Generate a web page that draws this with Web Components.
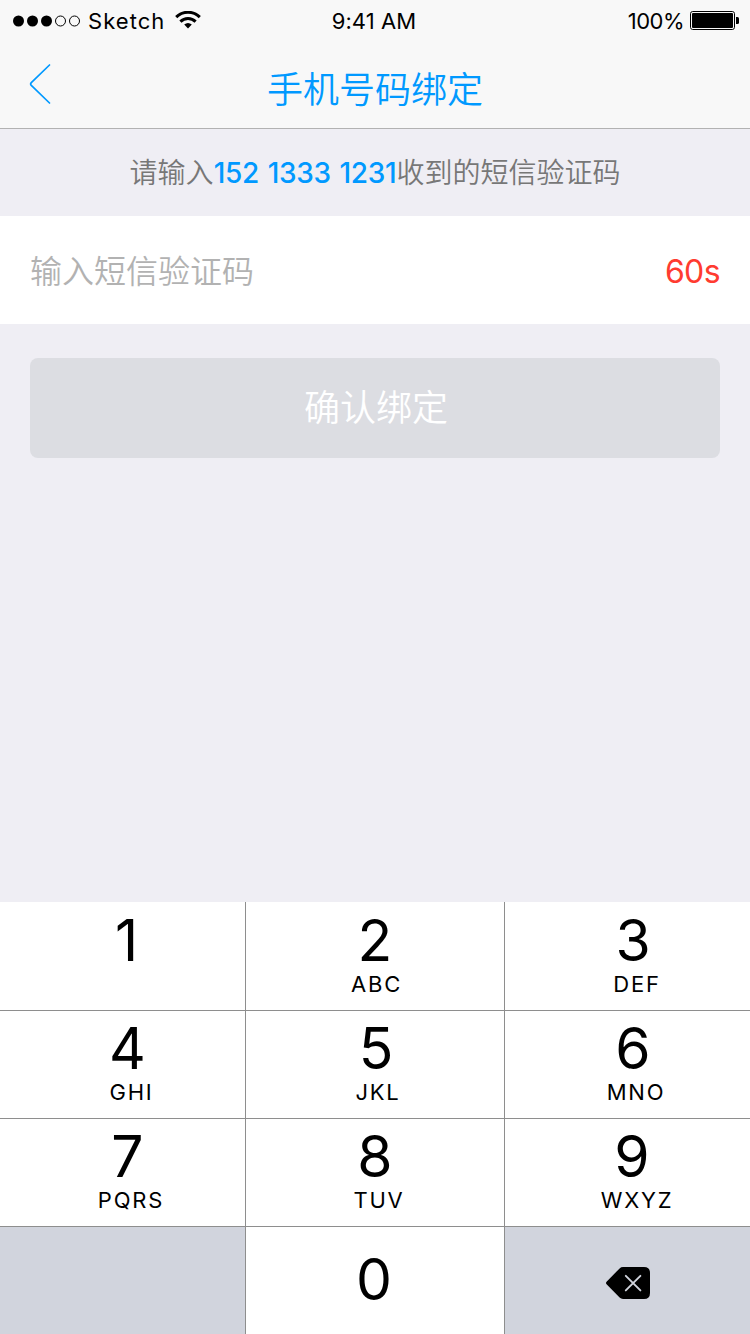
<!DOCTYPE html>
<html lang="zh-CN">
<head>
<meta charset="utf-8">
<title>手机号码绑定</title>
<style>
  html, body { margin: 0; padding: 0; }
  body {
    width: 750px; height: 1334px; overflow: hidden; background: #efeef4;
    font-family: Inter, "Noto Sans CJK SC", sans-serif; color: #000;
  }
</style>
</head>
<body>
<phone-screen>
  <status-bar slot="status" carrier="Sketch" time="9:41 AM" battery="100%"></status-bar>
  <nav-bar slot="nav">手机号码绑定</nav-bar>
  <sms-hint phone="152 1333 1231"></sms-hint>
  <code-field placeholder="输入短信验证码" countdown="60s"></code-field>
  <submit-button>确认绑定</submit-button>
  <number-pad slot="keyboard">
    <pad-key digit="1" style="--top:9px;--dx:-1px"></pad-key>
    <pad-key digit="2" style="--top:9px;--lx:1.5px">ABC</pad-key>
    <pad-key digit="3" style="--top:9px;--lx:4px">DEF</pad-key>
    <pad-key digit="4" style="--lx:4px">GHI</pad-key>
    <pad-key digit="5" style="--lx:3px;--dx:1px">JKL</pad-key>
    <pad-key digit="6" style="--lx:3px">MNO</pad-key>
    <pad-key digit="7" style="--lx:3.5px">PQRS</pad-key>
    <pad-key digit="8" style="--lx:4px">TUV</pad-key>
    <pad-key digit="9" style="--lx:4px;--dx:-1px">WXYZ</pad-key>
    <pad-key muted></pad-key>
    <pad-key digit="0" style="--top:23px;--dx:-1px"></pad-key>
    <pad-key muted><delete-icon></delete-icon></pad-key>
  </number-pad>
</phone-screen>
<script>
  const define = (name, html) => customElements.define(name, class extends HTMLElement {
    constructor() {
      super();
      const attr = key => this.getAttribute(key) || '';
      this.attachShadow({ mode: 'open' }).innerHTML = typeof html === 'function' ? html(attr) : html;
    }
  });

  define('phone-screen', `
    <style>
      :host { display: flex; flex-direction: column; width: 750px; height: 1334px; }
      header { height: 128px; background: #f8f8f8; border-bottom: 1px solid #b2b2b2; }
      main { flex: 1; }
    </style>
    <header><slot name="status"></slot><slot name="nav"></slot></header>
    <main><slot></slot></main>
    <slot name="keyboard"></slot>`);

  define('status-bar', a => `
    <style>
      :host { display: grid; grid-template-columns: 1fr auto 1fr; height: 40px; align-items: center;
              padding: 0 11px 0 13px; box-sizing: border-box; font-size: 22px; line-height: 38px; }
      div { display: flex; align-items: center; height: 40px; }
      svg { display: block; }
      .dots { margin-top: 1px; }
      span { padding-top: 2px; white-space: nowrap; }
      .carrier { margin-left: 8px; letter-spacing: 1.05px; }
      .wifi { margin-left: 10px; }
      .time { letter-spacing: .1px; padding-right: 4px; }
      .right { justify-content: flex-end; }
      .pct { margin-right: 6px; letter-spacing: -.5px; }
    </style>
    <div>
      <svg class="dots" width="67" height="12" viewBox="0 0 67 12">
        <g><circle cx="5.5" cy="6" r="5.5"/><circle cx="19.5" cy="6" r="5.5"/><circle cx="33.5" cy="6" r="5.5"/></g>
        <g fill="none" stroke="#000"><circle cx="47.5" cy="6" r="5"/><circle cx="61.5" cy="6" r="5"/></g>
      </svg>
      <span class="carrier">${a('carrier')}</span>
      <svg class="wifi" width="26" height="18" viewBox="0 0 26 18">
        <g fill="none" stroke="#000" stroke-width="3">
          <path d="M1.2 6.1A16.8 16.8 0 0 1 24.8 6.1"/>
          <path d="M5.4 10.6A10.8 10.8 0 0 1 20.6 10.6"/>
        </g>
        <path d="M9.2 13.6A6 6 0 0 1 16.8 13.6L13 17.6Z"/>
      </svg>
    </div>
    <span class="time">${a('time')}</span>
    <div class="right">
      <span class="pct">${a('battery')}</span>
      <svg width="49" height="19" viewBox="0 0 49 19">
        <rect x=".5" y=".5" width="44" height="18" rx="2.2" fill="none" stroke="#000"/>
        <rect x="2" y="2" width="41" height="15" rx="1"/>
        <path d="M46 6h1.5q1.5 0 1.5 1.5v4q0 1.5-1.5 1.5H46z"/>
      </svg>
    </div>`);

  define('nav-bar', `
    <style>
      :host { display: grid; grid-template-columns: 60px 1fr 60px; height: 88px; align-items: center; color: #0099ff; }
      svg { display: block; margin-left: 29px; }
      h1 { margin: 0; padding-top: 12px; font-size: 36px; font-weight: 350; line-height: 76px; text-align: center; }
    </style>
    <svg width="22" height="42" viewBox="0 0 22 42" fill="none" stroke="currentColor" stroke-width="1.7"
         stroke-linecap="round" stroke-linejoin="round"><path d="M20.5 2 L2.3 19.6 Q1 21 2.3 22.4 L20.5 40"/></svg>
    <h1><slot></slot></h1>`);

  define('sms-hint', a => `
    <style>
      :host { display: block; height: 87px; line-height: 88px; text-align: center; font-size: 28px;
              font-weight: 350; color: #777; white-space: nowrap; }
      b { font-weight: 500; color: #0099ff; letter-spacing: -.3px; word-spacing: 1.6px; }
    </style>请输入<b>${a('phone')}</b>收到的短信验证码`);

  define('code-field', a => `
    <style>
      :host { display: flex; justify-content: space-between; height: 108px; padding: 0 30px; background: #fff;
              font-size: 32px; line-height: 112px; }
      .ph { color: #b2b2b2; font-weight: 350; }
      .cd { color: #ff3b30; letter-spacing: -.6px; }
    </style><span class="ph">${a('placeholder')}</span><span class="cd">${a('countdown')}</span>`);

  define('submit-button', `
    <style>
      :host { display: block; margin: 34px 30px 0; }
      button { display: block; width: 100%; height: 100px; border: 0; padding: 0 0 0 2px; border-radius: 8px;
               background: #dcdde2; color: #fff; font: 350 36px/100px Inter, "Noto Sans CJK SC", sans-serif; }
    </style><button><slot></slot></button>`);

  define('number-pad', `
    <style>
      :host { display: grid; grid-template-columns: 245px 258px 245px; grid-template-rows: 108px 107px 107px 107px;
              gap: 1px; background: #8e8e8e; height: 432px; }
      ::slotted(:nth-child(3n+1)) { padding-left: 10px; }
      ::slotted(:nth-child(3n)) { padding-left: 11px; }
      ::slotted(:last-child) { padding: 4px 0 0 1px; }
    </style><slot></slot>`);

  define('pad-key', a => `
    <style>
      :host { display: flex; flex-direction: column; align-items: center; background: #fff; box-sizing: border-box; }
      :host([muted]) { background: #d1d4dd; justify-content: center; }
      .digit { font-size: 57px; line-height: 60px; margin-top: var(--top, 8px); margin-left: calc(var(--dx, 0px) * 2); }
      .letters { font-size: 22px; line-height: 26px; letter-spacing: 1.8px;
                 margin-left: calc(var(--lx, 0px) * 2); }
      :host([muted]) .letters { line-height: 0; letter-spacing: 0; }
    </style>${a('digit') ? `<span class="digit">${a('digit')}</span>` : ''}<span class="letters"><slot></slot></span>`);

  define('delete-icon', `
    <style>:host { display: block; } svg { display: block; }</style>
    <svg width="44" height="32" viewBox="0 0 44 32">
      <path d="M0 16Q0 15.2 .8 14.5L13.6 1.4Q15 0 17 0H38Q44 0 44 6V26Q44 32 38 32H17Q15 32 13.6 30.6L.8 17.5Q0 16.8 0 16Z"/>
      <path d="M19.8 8.8L34.4 23.4M34.4 8.8L19.8 23.4" stroke="#d1d4dd" stroke-width="1.9" stroke-linecap="round"/>
    </svg>`);
</script>
</body>
</html>
